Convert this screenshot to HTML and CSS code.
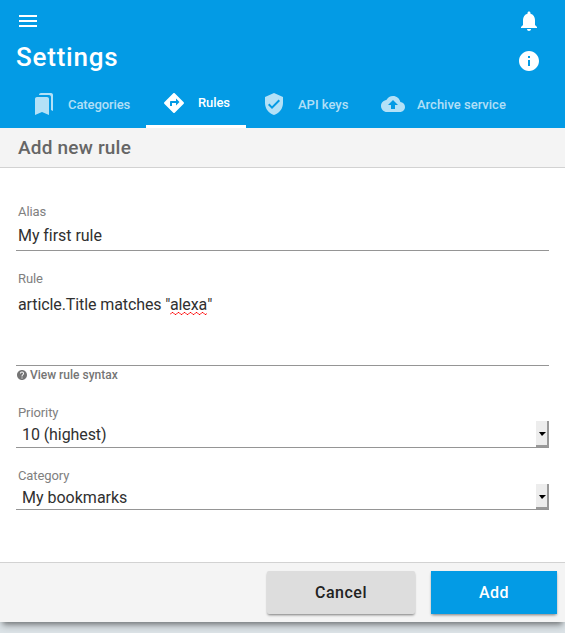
FILE: index.html
```html
<!DOCTYPE html>
<html lang="en">
<head>
<meta charset="utf-8">
<title>Settings</title>
<link rel="stylesheet" href="styles.css">
</head>
<body>
<main class="panel">
  <header class="header">
    <div class="bar">
      <svg class="icon" viewBox="0 0 24 24"><path d="M3 18h18v-2H3v2zm0-5h18v-2H3v2zm0-7v2h18V6H3z"/></svg>
      <svg class="icon" viewBox="0 0 24 24"><path d="M12 22c1.1 0 2-.9 2-2h-4c0 1.1.89 2 2 2zm6-6v-5c0-3.07-1.64-5.64-4.5-6.32V4c0-.83-.67-1.5-1.5-1.5s-1.5.67-1.5 1.5v.68C7.63 5.36 6 7.92 6 11v5l-2 2v1h16v-1l-2-2z"/></svg>
    </div>
    <div class="bar title-bar">
      <h1 class="title">Settings</h1>
      <svg class="icon info" viewBox="0 0 24 24"><path d="M12 2C6.48 2 2 6.48 2 12s4.48 10 10 10 10-4.48 10-10S17.52 2 12 2zm1 15h-2v-6h2v6zm0-8h-2V7h2v2z"/></svg>
    </div>
    <nav class="tabs">
      <a class="tab categories"><svg class="icon" viewBox="0 0 24 24"><path d="M19 18l2 1V3c0-1.1-.9-2-2-2H8.99C7.89 1 7 1.9 7 3h10c1.1 0 2 .9 2 2v13zM15 5H5c-1.1 0-2 .9-2 2v16l7-3 7 3V7c0-1.1-.9-2-2-2z"/></svg><span>Categories</span></a>
      <a class="tab rules active"><svg class="icon" viewBox="0 0 24 24"><path d="M21.71 11.29l-9-9c-.39-.39-1.02-.39-1.41 0l-9 9c-.39.39-.39 1.02 0 1.41l9 9c.39.39 1.02.39 1.41 0l9-9c.39-.38.39-1.01 0-1.41zM14 14.5V12h-4v3H8v-4c0-.55.45-1 1-1h5V7.5l3.5 3.5-3.5 3.5z"/></svg><span>Rules</span></a>
      <a class="tab keys"><svg class="icon" viewBox="0 0 24 24"><path d="M12 1L3 5v6c0 5.55 3.84 10.74 9 12 5.16-1.26 9-6.45 9-12V5l-9-4zm-2 16l-4-4 1.41-1.41L10 14.17l6.59-6.59L18 9l-8 8z"/></svg><span>API keys</span></a>
      <a class="tab archive"><svg class="icon" viewBox="0 0 24 24"><path d="M19.35 10.04C18.67 6.59 15.64 4 12 4 9.11 4 6.6 5.64 5.35 8.04 2.34 8.36 0 10.91 0 14c0 3.31 2.69 6 6 6h13c2.76 0 5-2.24 5-5 0-2.64-2.05-4.78-4.65-4.96zM14 13v4h-4v-4H7l5-5 5 5h-3z"/></svg><span>Archive service</span></a>
    </nav>
  </header>
  <h2 class="subtitle">Add new rule</h2>
  <form class="form">
    <div class="field alias">
      <span class="label">Alias</span>
      <div class="value">My first rule</div>
    </div>
    <div class="field rule">
      <span class="label">Rule</span>
      <div class="value">article.Title matches "<span class="misspelled">alexa</span>"</div>
    </div>
    <a class="help"><svg class="help-icon" viewBox="0 0 24 24"><path d="M12 2C6.48 2 2 6.48 2 12s4.48 10 10 10 10-4.48 10-10S17.52 2 12 2zm1 17h-2v-2h2v2zm2.07-7.75l-.9.92C13.45 12.9 13 13.5 13 15h-2v-.5c0-1.1.45-2.1 1.17-2.83l1.24-1.26c.37-.36.59-.86.59-1.41 0-1.1-.9-2-2-2s-2 .9-2 2H8c0-2.21 1.79-4 4-4s4 1.79 4 4c0 .88-.36 1.68-.93 2.25z"/></svg><span>View rule syntax</span></a>
    <div class="field priority">
      <span class="label">Priority</span>
      <div class="value select"><span>10 (highest)</span><i class="drop"></i></div>
    </div>
    <div class="field category">
      <span class="label">Category</span>
      <div class="value select"><span>My bookmarks</span><i class="drop"></i></div>
    </div>
  </form>
  <footer class="footer">
    <button class="button cancel" type="button">Cancel</button>
    <button class="button add" type="button">Add</button>
  </footer>
</main>
</body>
</html>
```
FILE: styles.css
```css
* { box-sizing: border-box; }
body {
  margin: 0;
  height: 633px;
  overflow: hidden;
  background: #dce3e7;
  font-family: Roboto, sans-serif;
  color: #303030;
}
.panel {
  height: 622px;
  display: flex;
  flex-direction: column;
  background: #fff;
  box-shadow: 0 6px 8px -2px rgba(0,0,0,.2), 0 5px 5px -3px rgba(0,0,0,.35);
}
.header {
  height: 128px;
  background: #039be5;
  color: #fff;
}
.icon { width: 24px; height: 24px; flex: none; fill: currentColor; display: block; }
.bar {
  height: 40px;
  padding: 9px 24px 0 16px;
  display: flex;
  justify-content: space-between;
  align-items: flex-start;
}
.title-bar { padding-top: 0; }
.title { margin: 0; font-size: 26px; line-height: 34px; font-weight: 500; letter-spacing: .78px; }
.info { margin-top: 9px; }
.tabs { display: flex; height: 48px; padding-left: 16px; }
.tab {
  display: flex;
  align-items: center;
  gap: 12px;
  height: 48px;
  padding: 0 16px;
  font-size: 13px;
  font-weight: 500;
  white-space: nowrap;
  color: rgba(255,255,255,.7);
}
.categories { width: 130px; letter-spacing: -.1px; }
.rules { width: 100px; letter-spacing: -.1px; }
.keys { width: 119px; }
.archive { width: 157px; }
.active { color: #fff; border-bottom: 3px solid #fff; }
.subtitle {
  margin: 0;
  height: 40px;
  padding-left: 18px;
  background: #f4f4f4;
  border-bottom: 1px solid #d2d2d2;
  color: #666;
  font-size: 19px;
  line-height: 39px;
  font-weight: 500;
  letter-spacing: .2px;
}
.form { flex: 1; padding: 36px 16px 0; }
.field { display: flex; flex-direction: column; border-bottom: 1px solid #959595; }
.label { padding-left: 2px; font-size: 13px; line-height: 16px; letter-spacing: -.1px; color: #808080; }
.value { padding-left: 2px; font-size: 16px; line-height: 20px; }
.alias { height: 47px; }
.alias .value { margin-top: 6px; letter-spacing: -.05px; }
.rule { height: 95px; margin-top: 20px; }
.rule .value { margin-top: 8px; letter-spacing: -.1px; }
.misspelled { position: relative; }
.misspelled::after {
  content: "";
  position: absolute;
  left: 0;
  right: 0;
  bottom: -1px;
  height: 3px;
  background: url("data:image/svg+xml,%3Csvg xmlns='http://www.w3.org/2000/svg' width='6' height='3'%3E%3Cpath d='M0 2.5L2 .5H3L5 2.5H6' fill='none' stroke='red'/%3E%3C/svg%3E") repeat-x;
}
.help {
  display: flex;
  align-items: center;
  gap: 2px;
  height: 18px;
  color: #757575;
  font-size: 12px;
  font-weight: 500;
}
.help-icon { width: 12px; height: 12px; fill: currentColor; }
.priority { height: 43px; margin-top: 21px; }
.priority .value { letter-spacing: -.08px; }
.category { height: 42px; margin-top: 20px; }
.select {
  display: flex;
  justify-content: space-between;
  flex: 1;
  padding-left: 6px;
}
.select > span { padding-top: 4px; }
.drop {
  width: 13px;
  display: flex;
  align-items: center;
  justify-content: center;
  padding-left: 2px;
  background: #ededed;
  border-right: 2px solid #999;
  border-bottom: 2px solid #999;
}
.drop::before { content: ""; margin-top: 2px; border: 3.5px solid transparent; border-top: 4px solid #000; border-bottom: 0; border-left-width: 3px; border-right-width: 4px; }
.footer {
  height: 60px;
  padding: 8px 8px 0;
  display: flex;
  justify-content: flex-end;
  gap: 16px;
  background: #f4f4f4;
  border-top: 1px solid #d2d2d2;
}
.button {
  height: 43px;
  padding: 0;
  border: 0;
  font: 500 16px Roboto, sans-serif;
  letter-spacing: .5px;
  box-shadow: 0 2px 3px -1px rgba(0,0,0,.4), 0 1px 2px rgba(0,0,0,.14);
}
.cancel { width: 148px; background: #ddd; color: #222; border-radius: 2px; }
.add { width: 126px; background: #039be5; color: #fff; }
```
